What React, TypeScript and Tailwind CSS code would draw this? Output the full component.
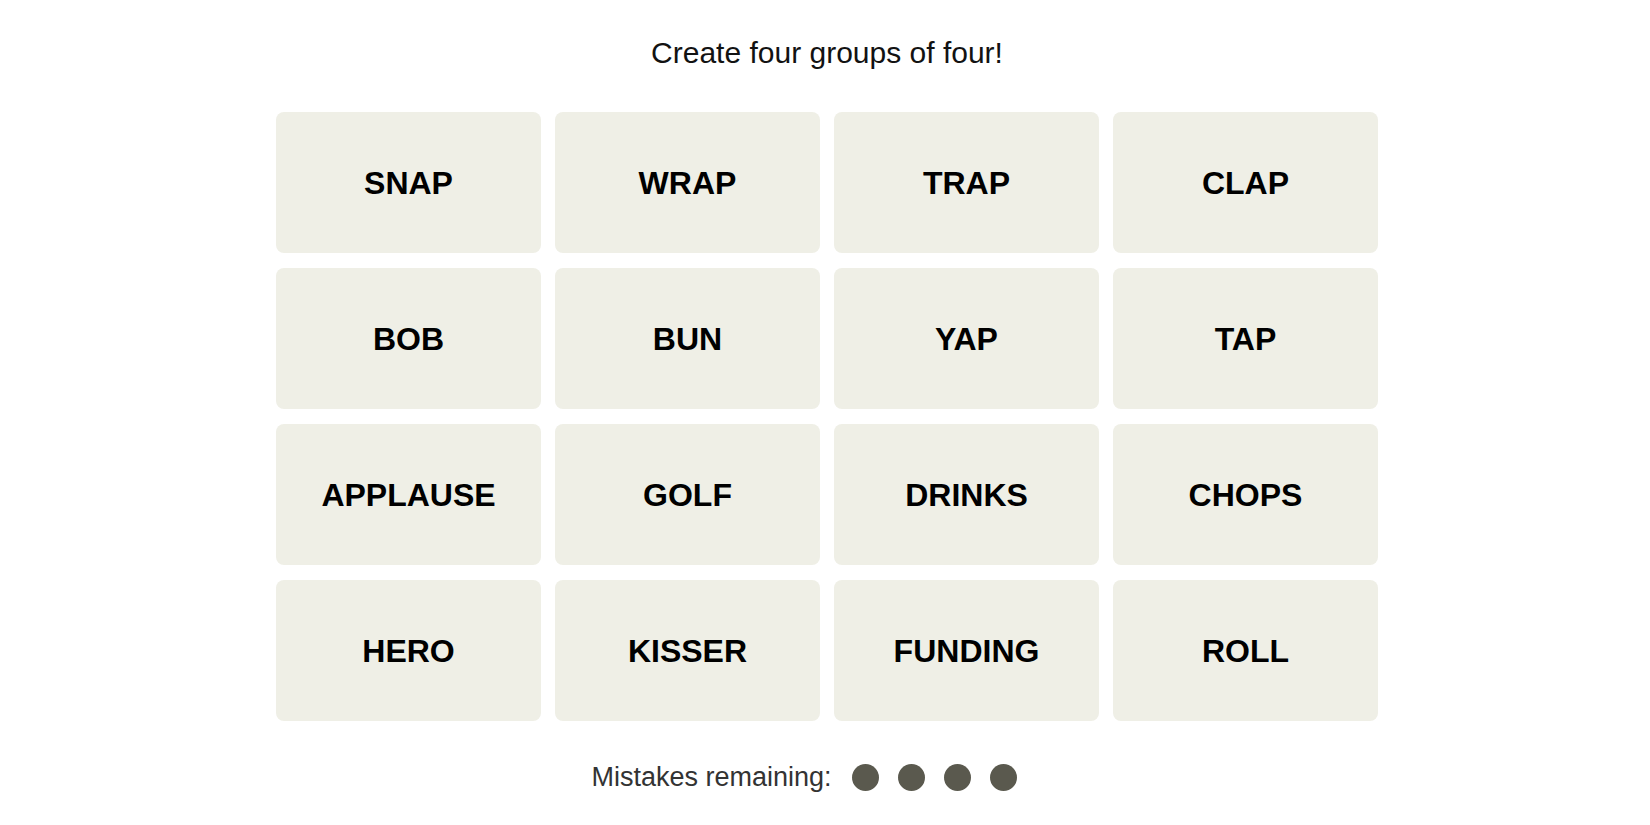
import React from "react";

const words = [
  "SNAP", "WRAP", "TRAP", "CLAP",
  "BOB", "BUN", "YAP", "TAP",
  "APPLAUSE", "GOLF", "DRINKS", "CHOPS",
  "HERO", "KISSER", "FUNDING", "ROLL",
];

export default function App() {
  return (
    <div className="flex min-h-screen w-full flex-col items-center bg-white pl-[4px] font-['Liberation_Sans',Arial,sans-serif]">
      <h2 className="mt-[35px] h-[36px] text-[30px] leading-[36px] font-normal text-[#121212]">
        Create four groups of four!
      </h2>

      <div className="mt-[41px] grid grid-cols-[repeat(4,265px)] gap-x-[14px] gap-y-[15px]">
        {words.map((w) => (
          <button
            key={w}
            className="flex h-[141px] items-center justify-center rounded-[8px] bg-[#efefe6] text-[32px] font-bold text-black"
          >
            {w}
          </button>
        ))}
      </div>

      <div className="mt-[40px] mr-[46px] flex h-[32px] items-center">
        <span className="text-[27px] leading-[32px] text-[#333333]">Mistakes remaining:</span>
        <div className="ml-[20px] flex gap-[19px]">
          {[0, 1, 2, 3].map((i) => (
            <span key={i} className="h-[27px] w-[27px] rounded-full bg-[#5a594e]" />
          ))}
        </div>
      </div>
    </div>
  );
}
